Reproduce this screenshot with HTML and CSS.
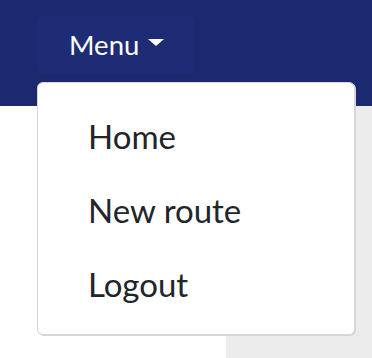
FILE: index.html
```html
<!DOCTYPE html>
<html lang="en">
<head>
<meta charset="utf-8">
<title>Menu</title>
<link rel="stylesheet" href="styles.css">
</head>
<body>
<header class="topbar">
  <div class="menu-wrap">
    <button class="menu-btn" type="button">Menu<span class="caret"></span></button>
    <nav class="dropdown">
      <a class="item" href="#">Home</a>
      <a class="item" href="#">New route</a>
      <a class="item" href="#">Logout</a>
    </nav>
  </div>
</header>
<main class="content">
  <div class="col-left"></div>
  <div class="col-right"></div>
</main>
</body>
</html>
```

FILE: styles.css
```css
html, body {
  margin: 0;
  padding: 0;
  height: 100%;
}
body {
  font-family: Lato, "Noto Sans", sans-serif;
  display: flex;
  flex-direction: column;
  background: #ffffff;
}
.topbar {
  height: 106px;
  background: #1b2a6e;
  padding: 16px 0 0 37px;
  box-sizing: border-box;
}
.menu-wrap {
  position: relative;
  display: inline-block;
}
.menu-btn {
  display: flex;
  align-items: center;
  height: 58px;
  width: 157px;
  padding: 0 0 0 31px;
  box-sizing: border-box;
  background: #1d2c74;
  border: 1px solid #1e2d76;
  border-radius: 6px;
  color: #ffffff;
  font-family: Lato, "Noto Sans", sans-serif;
  font-size: 27.5px;
  line-height: 58px;
  cursor: pointer;
}
.caret {
  display: inline-block;
  width: 0;
  height: 0;
  margin-left: 9px;
  margin-top: -6px;
  border-left: 8px solid transparent;
  border-right: 8px solid transparent;
  border-top: 7px solid #ffffff;
}
.dropdown {
  position: absolute;
  top: 66px;
  left: 0;
  width: 318px;
  box-sizing: border-box;
  background: #ffffff;
  border: 1px solid #d6d6d6;
  border-radius: 6px;
  box-shadow: 1px 1px 0 #d6d6d6;
  padding: 16px 0 13px;
  display: flex;
  flex-direction: column;
  z-index: 2;
}
.item {
  display: block;
  height: 74px;
  line-height: 74px;
  padding-left: 50px;
  font-size: 33px;
  color: #212529;
  text-decoration: none;
}
.content {
  flex: 1;
  display: grid;
  grid-template-columns: 226px 1fr;
}
.col-left {
  background: #ffffff;
}
.col-right {
  background: #ececec;
}
```
